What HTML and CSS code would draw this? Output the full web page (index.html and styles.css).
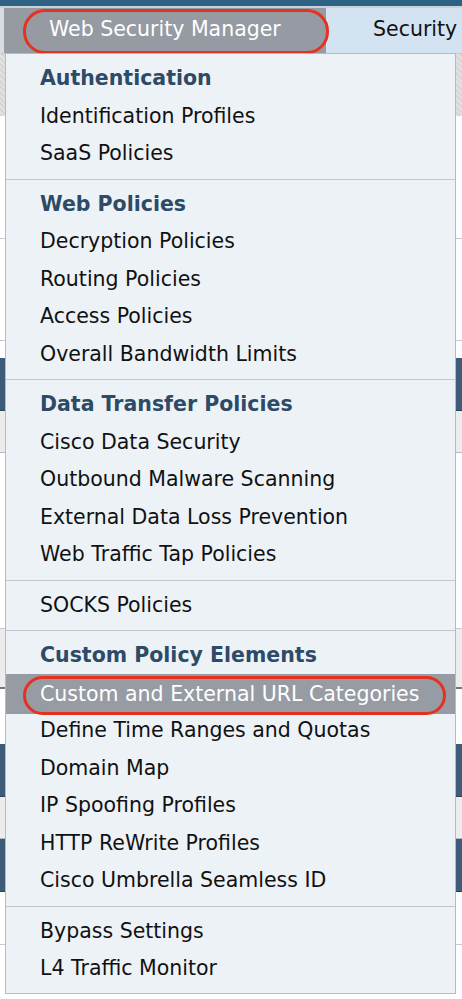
FILE: index.html
```html
<!doctype html>
<html lang="en">
    <head>
        <meta charset="UTF-8" />
        <meta name="viewport" content="width=device-width, initial-scale=1.0" />
        <title>Web Security Manager</title>
        <link rel="stylesheet" href="styles.css">
    </head>
    <body>
        <div class="topbar"></div>
        <nav class="nav">
            <div class="nav-tab active">Web Security Manager</div>
            <div class="nav-tab">Security</div>
        </nav>

        <!-- page behind the dropdown, only its edges show -->
        <main class="page">
            <div class="band hatch"></div>
            <div class="band blank tall"></div>
            <div class="band text-rows"></div>
            <div class="band blank short"></div>
            <div class="band head"></div>
            <div class="band sub"></div>
            <div class="band text-rows long"></div>
            <div class="band sub mid"></div>
            <div class="band blank mid2"></div>
            <div class="band head"></div>
            <div class="band sub"></div>
            <div class="band head"></div>
            <div class="band blank"></div>
        </main>

        <div class="menu">
            <div class="menu-section">
                <div class="menu-title">Authentication</div>
                <div class="menu-item">Identification Profiles</div>
                <div class="menu-item">SaaS Policies</div>
            </div>
            <div class="menu-section">
                <div class="menu-title">Web Policies</div>
                <div class="menu-item">Decryption Policies</div>
                <div class="menu-item">Routing Policies</div>
                <div class="menu-item">Access Policies</div>
                <div class="menu-item">Overall Bandwidth Limits</div>
            </div>
            <div class="menu-section">
                <div class="menu-title">Data Transfer Policies</div>
                <div class="menu-item">Cisco Data Security</div>
                <div class="menu-item">Outbound Malware Scanning</div>
                <div class="menu-item">External Data Loss Prevention</div>
                <div class="menu-item">Web Traffic Tap Policies</div>
            </div>
            <div class="menu-section">
                <div class="menu-item">SOCKS Policies</div>
            </div>
            <div class="menu-section">
                <div class="menu-title">Custom Policy Elements</div>
                <div class="menu-item selected">Custom and External URL Categories</div>
                <div class="menu-item">Define Time Ranges and Quotas</div>
                <div class="menu-item">Domain Map</div>
                <div class="menu-item">IP Spoofing Profiles</div>
                <div class="menu-item">HTTP ReWrite Profiles</div>
                <div class="menu-item">Cisco Umbrella Seamless ID</div>
            </div>
            <div class="menu-section">
                <div class="menu-item">Bypass Settings</div>
                <div class="menu-item">L4 Traffic Monitor</div>
            </div>
        </div>
    </body>
</html>
```

FILE: styles.css
```css
body {
    margin: 0;
    padding: 0;
    font-family: "DejaVu Sans", Verdana, sans-serif;
    font-size: 20.5px;
    background: #fff;
    position: relative;
    overflow: hidden;
    height: 999px;
}
.topbar {
    height: 6px;
    background: #2e6284;
    border-bottom: 2px solid #c9d3dc;
}
.nav {
    display: flex;
    height: 45px;
    background: #d3e3f1;
    padding-left: 4px;
    box-shadow: inset 4px 0 0 #d9dde2;
    overflow: hidden;
}
.nav-tab {
    flex-shrink: 0;
    line-height: 42px;
    color: #111;
    white-space: nowrap;
}
.nav-tab.active {
    position: relative;
    width: 322px;
    padding-left: 45px;
    box-sizing: border-box;
    background: #959aa3;
    color: #fff;
}
.nav-tab.active::after {
    content: "";
    position: absolute;
    left: 19px;
    right: -3px;
    top: 1px;
    bottom: -1px;
    border: 3px solid #e4321f;
    border-radius: 22px;
}
.nav-tab + .nav-tab {
    padding-left: 47px;
}

/* background page */
.page {
    border-top: 1px solid #c6c9cd;
}
.band {
    height: 52px;
    border-bottom: 1px solid #c8c8d4;
}
.hatch {
    height: 62px;
    border: 0;
    background: repeating-linear-gradient(45deg, #d6d6d6 0 2px, #e2e2e2 2px 4px);
}
.blank.tall {
    height: 122px;
}
.text-rows {
    height: 101px;
    background: #fff;
}
.blank.short {
    height: 17px;
    border: 0;
}
.head {
    background: #3f5b7a;
    border-bottom: 1px solid #2d4258;
}
.sub {
    height: 41px;
    background: #ececec;
    border-bottom: 1px solid #b8b8c4;
}
.text-rows.long {
    height: 175px;
}
.sub.mid {
    height: 58px;
    border-bottom: 2px solid #777;
}
.blank.mid2 {
    height: 55px;
    border: 0;
}
.blank {
    background: #fff;
}

/* dropdown */
.menu {
    position: absolute;
    top: 53px;
    left: 5px;
    width: 449px;
    background: #edf2f7;
    border: 1px solid #b7babe;
}
.menu-section {
    padding: 6px 0;
    border-bottom: 1px solid #c3c6ca;
}
.menu-section:last-child {
    border-bottom: 0;
    padding-bottom: 5px;
}
.menu-title,
.menu-item {
    height: 37.5px;
    line-height: 37.5px;
    padding-left: 34px;
    white-space: nowrap;
}
.menu-title {
    font-weight: bold;
    color: #2d4a66;
}
.menu-item {
    color: #111;
}
.menu-item.selected {
    position: relative;
    height: 40px;
    line-height: 40px;
    margin: -1px 0 -1.5px;
    background: #979ba3;
    color: #fff;
}
.menu-item.selected::after {
    content: "";
    position: absolute;
    left: 17px;
    right: 9px;
    top: 2px;
    bottom: -1px;
    border: 3px solid #e4321f;
    border-radius: 20px;
}
```
